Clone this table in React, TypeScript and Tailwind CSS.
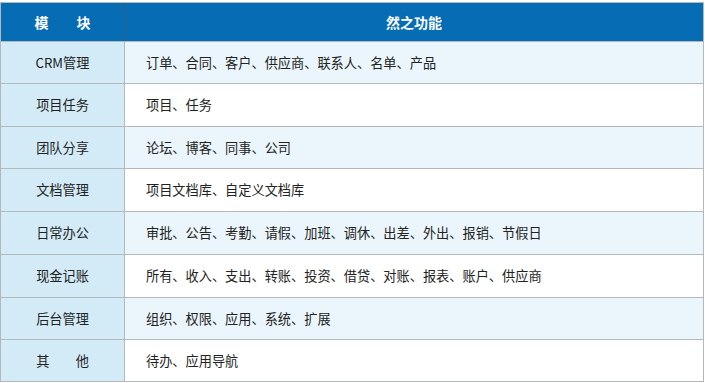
import React from 'react';

const rows = [
  { name: 'CRM管理', items: '订单、合同、客户、供应商、联系人、名单、产品', h: 'h-[42px]' },
  { name: '项目任务', items: '项目、任务', h: 'h-[43px]' },
  { name: '团队分享', items: '论坛、博客、同事、公司', h: 'h-[42px]' },
  { name: '文档管理', items: '项目文档库、自定义文档库', h: 'h-[43px]' },
  { name: '日常办公', items: '审批、公告、考勤、请假、加班、调休、出差、外出、报销、节假日', h: 'h-[43px]' },
  { name: '现金记账', items: '所有、收入、支出、转账、投资、借贷、对账、报表、账户、供应商', h: 'h-[43px]' },
  { name: '后台管理', items: '组织、权限、应用、系统、扩展', h: 'h-[42px]' },
  { name: '其　　他', items: '待办、应用导航', h: 'h-[41px]' },
];

const App = () => {
  return (
    <div
      className="w-[705px] h-[383px] bg-white pt-[2px] text-[#222]"
      style={{ fontFamily: '"Noto Sans CJK SC", "Noto Sans", sans-serif' }}
    >
      <div className="w-[704px] border border-[#b3b8bd]">
        {/* header */}
        <div className="grid grid-cols-[124px_1fr] h-[39px] bg-[#066cb4] border-b border-[#b3b8bd] text-white font-bold text-[14px]">
          <div className="flex items-center justify-center border-r border-[#2d5f87] whitespace-pre">模　　块</div>
          <div className="flex items-center justify-center">然之功能</div>
        </div>

        {rows.map((row, i) => (
          <div
            key={row.name}
            className={`grid grid-cols-[124px_1fr] ${row.h} ${i < rows.length - 1 ? 'border-b border-[#b3b8bd]' : ''} ${
              i % 2 === 0 ? 'bg-[#eaf6fc]' : 'bg-white'
            } text-[13.2px] leading-none`}
          >
            <div className="flex items-center justify-center bg-[#d2ebf7] border-r border-[#b3b8bd] whitespace-pre">
              {row.name}
            </div>
            <div className="flex items-center pl-[21px]">{row.items}</div>
          </div>
        ))}
      </div>
    </div>
  );
};

export default App;
